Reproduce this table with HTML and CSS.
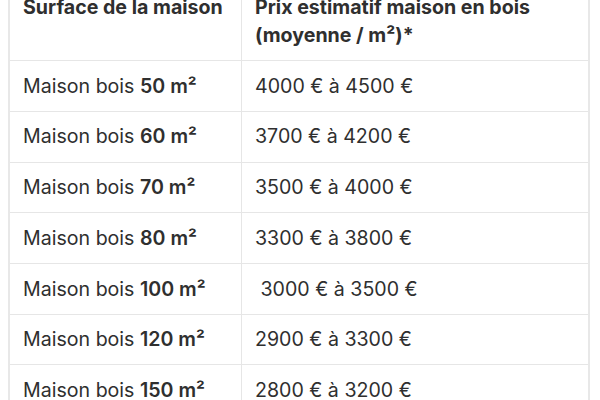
FILE: index.html
```html
<!DOCTYPE html>
<html lang="fr">
<head>
<meta charset="utf-8">
<link rel="stylesheet" href="styles.css">
</head>
<body>
<table class="prix">
  <thead>
    <tr><th class="c1">Surface de la maison</th><th class="c2">Prix estimatif maison en bois (moyenne / m²)*</th></tr>
  </thead>
  <tbody>
    <tr><td>Maison bois <strong>50 m²</strong></td><td>4000 € à 4500 €</td></tr>
    <tr><td>Maison bois <strong>60 m²</strong></td><td>3700 € à 4200 €</td></tr>
    <tr><td>Maison bois <strong>70 m²</strong></td><td>3500 € à 4000 €</td></tr>
    <tr><td>Maison bois <strong>80 m²</strong></td><td>3300 € à 3800 €</td></tr>
    <tr><td>Maison bois <strong>100 m²</strong></td><td>&nbsp;3000 € à 3500 €</td></tr>
    <tr><td>Maison bois <strong>120 m²</strong></td><td>2900 € à 3300 €</td></tr>
    <tr><td>Maison bois <strong>150 m²</strong></td><td>2800 € à 3200 €</td></tr>
  </tbody>
</table>
</body>
</html>
```
FILE: styles.css
```css
html, body {
  margin: 0;
  padding: 0;
  background: #ffffff;
}
body {
  padding: 0 10px 0 8px;
  overflow: hidden;
  font-family: Inter, "Noto Sans", sans-serif;
  font-size: 19.6px;
  color: #2f2f2f;
}
.prix {
  width: 582px;
  margin-top: -20px;
  border-collapse: collapse;
  border: 2px solid #e8e8e8;
}
.prix th,
.prix td {
  border: 1px solid #e6e6e6;
  padding: 10.6px 13px;
  line-height: 28.5px;
  text-align: left;
  vertical-align: middle;
}
.prix th {
  font-weight: 650;
  vertical-align: top;
}
.prix .c1 {
  width: 205px;
}
.prix strong {
  font-weight: 600;
}
```
